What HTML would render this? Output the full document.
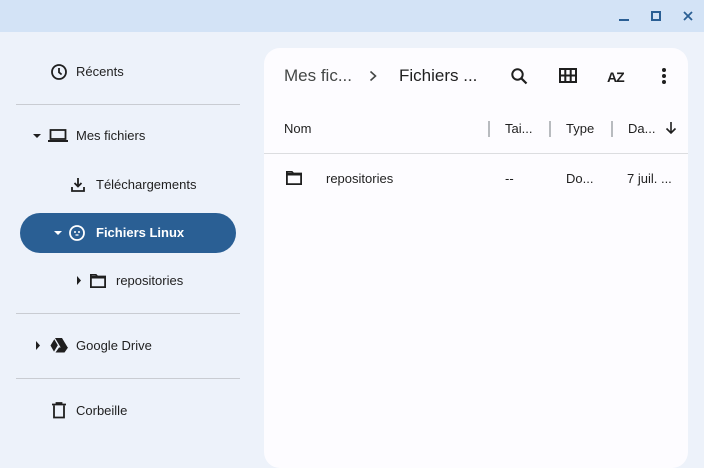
<!DOCTYPE html>
<html><head><meta charset="utf-8"><style>
*{margin:0;padding:0;box-sizing:border-box}
body{width:704px;height:452px;background:#edf2fa;font-family:"Liberation Sans",sans-serif;color:#1f1f1f;position:relative;overflow:hidden;font-size:13px}
.a{position:absolute}
.t{position:absolute;white-space:nowrap;line-height:16px}
.sep{position:absolute;left:16px;width:224px;height:1px;background:#c9ccd2}
</style></head><body>
<div class="a" style="left:0;top:0;width:704px;height:32px;background:#d3e3f6"></div>
<div class="a" style="left:619px;top:19px;width:10px;height:2px;background:#2a5f94"></div>
<div class="a" style="left:651px;top:11px;width:10px;height:10px;border:2px solid #2a5f94"></div>
<svg class="a" style="left:683px;top:11px" width="10" height="10"><path d="M1 1L9 9M9 1L1 9" stroke="#2a5f94" stroke-width="1.8"/></svg>

<svg class="a" style="left:50px;top:63px" width="18" height="18" viewBox="0 0 18 18"><circle cx="9" cy="9" r="7" fill="none" stroke="#1f1f1f" stroke-width="1.8"/><path d="M9 5v4.3l2.6 2.2" fill="none" stroke="#1f1f1f" stroke-width="1.8"/></svg>
<div class="t" style="left:76px;top:64px">Récents</div>
<div class="sep" style="top:104px"></div>

<svg class="a" style="left:33px;top:133px" width="8" height="6"><path d="M0 1h8L4 5z" fill="#1f1f1f"/></svg>
<svg class="a" style="left:48px;top:128px" width="20" height="16"><rect x="2.5" y="2" width="15" height="9" fill="none" stroke="#1f1f1f" stroke-width="1.8"/><rect x="0" y="12" width="20" height="2" fill="#1f1f1f"/></svg>
<div class="t" style="left:76px;top:128px">Mes fichiers</div>

<svg class="a" style="left:71px;top:177px" width="14" height="16"><path d="M7 1v8M3.5 6L7 9.5 10.5 6" fill="none" stroke="#1f1f1f" stroke-width="1.8"/><path d="M1 10v4h12v-4" fill="none" stroke="#1f1f1f" stroke-width="1.8"/></svg>
<div class="t" style="left:96px;top:177px">Téléchargements</div>

<div class="a" style="left:20px;top:213px;width:216px;height:40px;border-radius:20px;background:#2a5f94"></div>
<svg class="a" style="left:54px;top:230px" width="8" height="6"><path d="M0 1h8L4 5z" fill="#fff"/></svg>
<svg class="a" style="left:68px;top:224px" width="18" height="18"><circle cx="9" cy="9" r="7" fill="none" stroke="#fff" stroke-width="1.8"/><circle cx="7" cy="8" r="1" fill="#fff"/><circle cx="11" cy="8" r="1" fill="#fff"/><path d="M7.5 11h3" stroke="#fff" stroke-width="1.3"/></svg>
<div class="t" style="left:96px;top:225px;color:#fff;font-weight:bold">Fichiers Linux</div>

<svg class="a" style="left:76px;top:276px" width="6" height="9"><path d="M1 0v9l4-4.5z" fill="#1f1f1f"/></svg>
<svg class="a" style="left:89px;top:273px" width="18" height="16"><path d="M1.9 1.9h5l1.5 1.6h7.7v10.6H1.9z" fill="none" stroke="#1f1f1f" stroke-width="1.8"/><rect x="1" y="3" width="16" height="2.5" fill="#1f1f1f"/></svg>
<div class="t" style="left:116px;top:273px">repositories</div>
<div class="sep" style="top:313px"></div>

<svg class="a" style="left:35px;top:341px" width="6" height="9"><path d="M1 0v9l4-4.5z" fill="#1f1f1f"/></svg>
<svg class="a" style="left:49px;top:337px" width="19" height="17"><path d="M6 1h7l6 10h-7z" fill="#1f1f1f"/><path d="M5.3 2.2L8.8 8.2 5 14.6 1.5 8.5z" fill="#1f1f1f"/><path d="M6.5 15.5L10 10.5h9l-3.5 5z" fill="#1f1f1f"/></svg>
<div class="t" style="left:76px;top:338px">Google Drive</div>
<div class="sep" style="top:378px"></div>

<svg class="a" style="left:51px;top:402px" width="16" height="17"><path d="M1 2.5h14M5.5 2.5V1h5v1.5" fill="none" stroke="#1f1f1f" stroke-width="1.8"/><path d="M3 3.5v12h10v-12" fill="none" stroke="#1f1f1f" stroke-width="1.8"/></svg>
<div class="t" style="left:76px;top:403px">Corbeille</div>

<div class="a" style="left:264px;top:48px;width:424px;height:420px;background:#fdfcff;border-radius:16px"></div>
<div class="t" style="left:284px;top:67px;font-size:17px;line-height:18px;color:#444746">Mes fic...</div>
<svg class="a" style="left:369px;top:70px" width="8" height="12"><path d="M1.5 1.5l5 4.5-5 4.5" fill="none" stroke="#444746" stroke-width="1.6"/></svg>
<div class="t" style="left:399px;top:67px;font-size:17px;line-height:18px">Fichiers ...</div>
<svg class="a" style="left:510px;top:67px" width="18" height="18"><circle cx="7.5" cy="7.5" r="5.2" fill="none" stroke="#1f1f1f" stroke-width="2"/><path d="M11.3 11.3L16.5 16.5" stroke="#1f1f1f" stroke-width="2.2"/></svg>
<svg class="a" style="left:559px;top:68px" width="18" height="15"><rect x="1" y="1" width="16" height="13" fill="none" stroke="#1f1f1f" stroke-width="2"/><path d="M6.3 1v13M11.7 1v13M1 7.5h16" stroke="#1f1f1f" stroke-width="2"/></svg>
<div class="t" style="left:607px;top:69px;font-size:14px;font-weight:bold;letter-spacing:-1px">AZ</div>
<svg class="a" style="left:661px;top:67px" width="6" height="18"><circle cx="3" cy="3" r="2" fill="#1f1f1f"/><circle cx="3" cy="9" r="2" fill="#1f1f1f"/><circle cx="3" cy="15" r="2" fill="#1f1f1f"/></svg>

<div class="t" style="left:284px;top:121px">Nom</div>
<div class="a" style="left:488px;top:121px;width:2px;height:16px;background:#b8bbbf"></div>
<div class="t" style="left:505px;top:121px">Tai...</div>
<div class="a" style="left:549px;top:121px;width:2px;height:16px;background:#b8bbbf"></div>
<div class="t" style="left:566px;top:121px">Type</div>
<div class="a" style="left:611px;top:121px;width:2px;height:16px;background:#b8bbbf"></div>
<div class="t" style="left:628px;top:121px">Da...</div>
<svg class="a" style="left:665px;top:121px" width="12" height="14"><path d="M6 1v11M1.5 7.5L6 12l4.5-4.5" fill="none" stroke="#1f1f1f" stroke-width="1.6"/></svg>
<div class="a" style="left:264px;top:153px;width:424px;height:1px;background:#dcdde0"></div>

<svg class="a" style="left:285px;top:170px" width="18" height="16"><path d="M1.9 1.9h5l1.5 1.6h7.7v10.6H1.9z" fill="none" stroke="#1f1f1f" stroke-width="1.8"/><rect x="1" y="3" width="16" height="2.5" fill="#1f1f1f"/></svg>
<div class="t" style="left:326px;top:171px">repositories</div>
<div class="t" style="left:505px;top:171px">--</div>
<div class="t" style="left:566px;top:171px">Do...</div>
<div class="t" style="left:627px;top:171px">7 juil. ...</div>
</body></html>
